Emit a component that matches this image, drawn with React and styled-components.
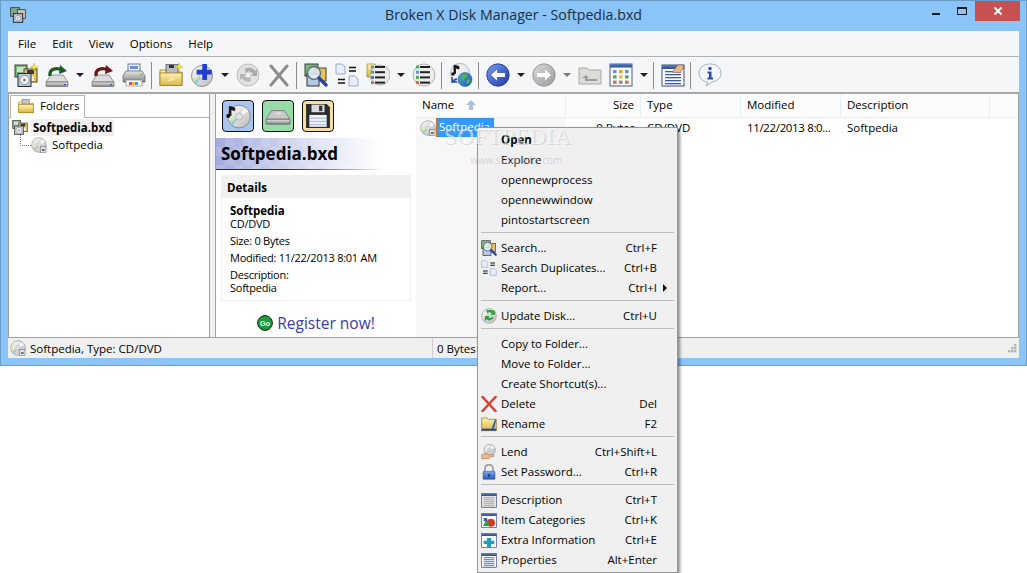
import React from 'react';
import styled, { createGlobalStyle } from 'styled-components';

const Global = createGlobalStyle`
  html, body { margin: 0; padding: 0; background: #fff; }
  body { font-family: "Open Sans", "Noto Sans", "Liberation Sans", sans-serif; font-size: 11.5px; color: #000; }
`;

/* ---------- icons ---------- */
const IconSvg = styled.svg`display: block; flex: none;`;
const DefsSvg = styled.svg`display: block; width: 0; height: 0;`;
const I = ({ s = 24, children }) => <IconSvg width={s} height={s} viewBox="0 0 24 24">{children}</IconSvg>;

const Grad = ({ id, a, b, diag }) => (
  <linearGradient id={id} x1="0" y1="0" x2={diag ? '1' : '0'} y2="1">
    <stop offset="0" stopColor={a} /><stop offset="1" stopColor={b} />
  </linearGradient>
);
const Defs = () => (
  <DefsSvg>
    <defs>
      <Grad id="gDisc" a="#fbfbfb" b="#bcbcbc" diag />
      <Grad id="gDrive" a="#e6e6e6" b="#858585" />
      <Grad id="gFolder" a="#fff2ae" b="#dcb548" />
      <Grad id="gBlue" a="#7c9cf4" b="#1a37a4" diag />
      <Grad id="gGrey" a="#dadada" b="#9a9a9a" diag />
      <Grad id="gGlobe" a="#4aa6e8" b="#1b5fb0" diag />
      <Grad id="gWin" a="#5a7fc4" b="#2a4a90" />
      <Grad id="gLock" a="#7aa6f0" b="#2a58b8" />
    </defs>
  </DefsSvg>
);

const wedge = (cx, cy, r, a1, a2) => {
  const p = (a) => `${(cx + r * Math.cos(a * Math.PI / 180)).toFixed(2)} ${(cy + r * Math.sin(a * Math.PI / 180)).toFixed(2)}`;
  return `M${cx} ${cy}L${p(a1)}A${r} ${r} 0 0 1 ${p(a2)}Z`;
};
const Disc = ({ cx = 12, cy = 12, r = 11 }) => (
  <g>
    <circle cx={cx} cy={cy} r={r} fill="url(#gDisc)" stroke="#8a8a8a" strokeWidth="0.9" />
    <path d={wedge(cx, cy, r - 1, 125, 145)} fill="#8fc8ee" />
    <path d={wedge(cx, cy, r - 1, 145, 160)} fill="#c5e79a" />
    <path d={wedge(cx, cy, r - 1, 160, 172)} fill="#f2e7a0" />
    <path d={wedge(cx, cy, r - 1, 305, 330)} fill="#ffffff" />
    <circle cx={cx} cy={cy} r={r * 0.3} fill="#ececec" stroke="#a4a4a4" strokeWidth="0.7" />
    <circle cx={cx} cy={cy} r={r * 0.11} fill="#fff" stroke="#999" strokeWidth="0.4" />
  </g>
);
const DiscBadge = ({ s = 16 }) => (
  <I s={s}><Disc />
    <rect x="14.5" y="14" width="8" height="9" fill="#e2e2e2" stroke="#777" strokeWidth="0.9" />
    <rect x="16.5" y="18" width="4" height="3" fill="#707070" />
  </I>
);
const Sparkle = ({ x = 20, y = 4 }) => (
  <path d={`M${x} ${y - 4}l1 3 3 1-3 1-1 3-1-3-3-1 3-1z`} fill="#ffe84a" stroke="#b89a10" strokeWidth="0.4" />
);
const Collection = ({ s = 24, spark }) => (
  <I s={s}>
    <rect x="1" y="2" width="12" height="12" fill="#79b57c" stroke="#3f3f3f" />
    <rect x="3" y="4" width="8" height="5" fill="#c9e4c8" />
    <rect x="10" y="6" width="13" height="13" fill="#e8c35a" stroke="#4c4226" />
    <rect x="13" y="7" width="7" height="4" fill="#3d3d3d" />
    <rect x="13" y="13" width="7" height="5" fill="#fff6d0" />
    <rect x="4" y="10.5" width="13" height="13" fill="#b5c8e6" stroke="#2e2e2e" />
    <circle cx="10.5" cy="17" r="4.6" fill="#f3f3f3" stroke="#666" strokeWidth="0.6" />
    <circle cx="10.5" cy="17" r="1.3" fill="#777" />
    {spark && <Sparkle />}
  </I>
);
const Drive = ({ color }) => (
  <I>
    <path d="M6 12L1 19H23L18 12Z" fill="#dcdcdc" stroke="#777" strokeWidth="0.7" />
    <rect x="1" y="19" width="22" height="4.5" rx="0.8" fill="url(#gDrive)" stroke="#666" strokeWidth="0.7" />
    <rect x="19" y="21" width="2" height="1.2" fill="#3050d0" />
    <path d="M5 13C4 6 11 4 17 7" fill="none" stroke={color} strokeWidth="3.4" />
    <path d="M15 2L22 8L14 11Z" fill={color} />
  </I>
);
const Printer = () => (
  <I>
    <rect x="6" y="1" width="12" height="8" fill="#eef3fb" stroke="#6a7a9a" />
    <rect x="8" y="3" width="8" height="3" fill="#6a8fdc" />
    <path d="M4 8H20L23 13V19H1V13Z" fill="url(#gDrive)" stroke="#5a5a5a" strokeWidth="0.7" />
    <rect x="4" y="17" width="16" height="6" fill="#fafafa" stroke="#777" strokeWidth="0.6" />
    <rect x="7" y="19" width="3" height="3" fill="#d040a0" /><rect x="10" y="19" width="3" height="3" fill="#e8c030" /><rect x="13" y="19" width="3" height="3" fill="#30a0d8" />
    <rect x="18" y="11" width="2" height="1.5" fill="#50c050" />
  </I>
);
const FolderNew = () => (
  <I>
    <path d="M1 7H9L11 9H23V22.5H1Z" fill="url(#gFolder)" stroke="#a38526" strokeWidth="0.9" />
    <rect x="7" y="1.5" width="12" height="9" fill="#b8bcc4" stroke="#4a4a4a" strokeWidth="0.7" />
    <rect x="10" y="2" width="5" height="3" fill="#333" />
    <rect x="1" y="10" width="22" height="12.5" fill="url(#gFolder)" stroke="#a38526" strokeWidth="0.9" />
    <path d="M9 18c2-3 5-3 7-4-1 3-4 5-7 4z" fill="#f6e9b8" />
    <Sparkle />
  </I>
);
const DiscPlus = () => (
  <I><Disc cy={13} r={10.5} />
    <path d="M14 1h5v6h5v5h-5v6h-5v-6H8V7h6z" fill="#1f3fd0" transform="translate(-1 0) scale(.95)" />
  </I>
);
const DiscSync = () => (
  <I>
    <circle cx="12" cy="12" r="11" fill="#e2e2e2" stroke="#bdbdbd" />
    <circle cx="12" cy="12" r="3" fill="#f2f2f2" stroke="#c8c8c8" />
    <path d="M9 6a7 7 0 0 1 10 2l2-2v7h-6l2-2a4 4 0 0 0-7-1z" fill="#a9a9a9" />
    <path d="M15 18a7 7 0 0 1-9-3l-2 2v-6h6l-2 2a4 4 0 0 0 6 1z" fill="#b5b5b5" />
  </I>
);
const CrossGrey = () => (
  <I><path d="M4 3L20 22M20 3L4 22" stroke="#8c8c8c" strokeWidth="3" strokeLinecap="round" /></I>
);
const CrossRed = () => (
  <I s={16}><path d="M2 1L22 23M22 1L2 23" stroke="#dc3a2a" strokeWidth="3.4" strokeLinecap="round" /></I>
);
const Search = ({ s = 24 }) => (
  <I s={s}>
    <rect x="1" y="1" width="13" height="12" fill="#79b57c" stroke="#3f3f3f" />
    <rect x="12" y="5" width="10" height="13" fill="#e8c35a" stroke="#4c4226" />
    <rect x="3" y="11" width="12" height="12" fill="#b5c8e6" stroke="#2e2e2e" />
    <circle cx="10" cy="10" r="6.5" fill="#e6eef4" fillOpacity=".85" stroke="#5c6c7c" strokeWidth="1.4" />
    <path d="M15 15L22 22" stroke="#2646a8" strokeWidth="3.4" strokeLinecap="round" />
  </I>
);
const Dup = ({ s = 24 }) => (
  <I s={s}>
    <path d="M1 1H7L10 4V11H1Z" fill="#e8eefa" stroke="#8a98b8" strokeWidth="0.8" />
    <path d="M14 13H20L23 16V23H14Z" fill="#e8eefa" stroke="#8a98b8" strokeWidth="0.8" />
    <path d="M14 4.5H21M14 8H21M3 16.5H10M3 20H10" stroke="#111" strokeWidth="1.6" />
  </I>
);
const Rows = ({ x = 3, colors }) => colors.map((c, i) => (
  <g key={i}>
    <rect x={x} y={2.5 + i * 5.2} width="3" height="3" fill={c} />
    <rect x={x + 4} y={3 + i * 5.2} width="10" height="2" fill="#222" />
  </g>
));
const ItemsFolder = () => (
  <I>
    <path d="M1 1H9L11 3V14H1Z" fill="url(#gFolder)" stroke="#a38526" strokeWidth="0.7" />
    <circle cx="14" cy="12" r="10" fill="#ececec" stroke="#999" strokeWidth="0.7" />
    <Rows x={5} colors={['#6a8fdc', '#50a860', '#5070c0', '#d86a50']} />
  </I>
);
const ItemsDisc = () => (
  <I>
    <circle cx="12" cy="12" r="11" fill="#ececec" stroke="#999" strokeWidth="0.7" />
    <Rows x={4} colors={['#50a860', '#6a8fdc', '#50a860', '#d86a50']} />
  </I>
);
const Note = () => (
  <g>
    <path d="M5 10V2L10 3.5V6L6.5 5V11" fill="#111" stroke="#111" strokeWidth="0.8" />
    <circle cx="4" cy="11" r="1.8" fill="#111" />
  </g>
);
const GlobeDisc = () => (
  <I>
    <circle cx="11" cy="10" r="9.5" fill="#eee" stroke="#999" strokeWidth="0.7" />
    <Note />
    <circle cx="16" cy="16.5" r="7" fill="url(#gGlobe)" stroke="#164a8c" strokeWidth="0.5" />
    <path d="M12 13c2-2 5-2 6-1s-1 3-2 3-1 3-2 3-2-3-2-5zM18 17c2-1 3 0 3 1s-2 3-3 3 0-3 0-4z" fill="#54b43c" />
    <path d="M3 14v5h5M4 19c1-2 2-3 4-3" fill="none" stroke="#1f4ab0" strokeWidth="1.6" />
  </I>
);
const RoundArrow = ({ dir, fill }) => (
  <I>
    <circle cx="12" cy="12" r="11.2" fill={fill} stroke={dir === 'l' ? '#18308c' : '#8c8c8c'} strokeWidth="0.8" />
    <path d={dir === 'l' ? 'M5 12L11 6.5V10H19V14H11V17.5Z' : 'M19 12L13 6.5V10H5V14H13V17.5Z'} fill="#fff" />
  </I>
);
const UpFolder = () => (
  <I>
    <path d="M1 5H9L11 7H23V21H1Z" fill="#dcdcd8" stroke="#a8a8a8" />
    <path d="M8 12l-4 3h3v3h12v-2H9v-1h2z" fill="#9c9c9c" />
  </I>
);
const GridWin = () => (
  <I>
    <rect x="1" y="1" width="22" height="22" fill="#fbfbfb" stroke="#4a5a90" strokeWidth="1" />
    <rect x="1" y="1" width="22" height="3.5" fill="url(#gWin)" />
    {[['#6a8fdc', '#e0a040', '#6a8fdc'], ['#50a860', '#e0c040', '#50a860'], ['#d86a50', '#8a8a8a', '#d86a50']].map((r, j) =>
      r.map((c, i) => <rect key={`${i}${j}`} x={4 + i * 6} y={7 + j * 5.3} width="3.6" height="3.2" fill={c} />))}
  </I>
);
const WinLines = ({ s = 24, hand, plus, cats, dim }) => (
  <I s={s}>
    <rect x="1" y="2" width="22" height="21" fill={dim ? '#e4e4e4' : '#fdfdfd'} stroke="#384a88" strokeWidth="1" />
    <rect x="1" y="2" width="22" height="4" fill="url(#gWin)" />
    {!plus && !cats && [8, 11, 14, 17, 20].map((y) => <rect key={y} x="4" y={y} width="16" height="1.3" fill={dim ? '#a0a0a0' : '#3a5aa8'} />)}
    {hand && <path d="M11 9l6-7c2-1 5 0 6 2l-4 6z" fill="#eab78a" stroke="#8a5a30" strokeWidth="0.6" />}
    {plus && <path d="M9 9h6v4h5v5h-5v5H9v-5H4v-5h5z" fill="#20a0b8" />}
    {cats && <g><circle cx="15" cy="16" r="6" fill="#dc3a20" /><path d="M3 21L9 10L13 21Z" fill="#30a040" /><rect x="4" y="9" width="5" height="5" fill="#3060c0" /></g>}
  </I>
);
const InfoBubble = () => (
  <I>
    <path d="M12 1C5 1 1 5 1 10s4 9 9 9l-2 4 6-4c5-1 9-4 9-9s-4-9-11-9z" fill="#f6f8fd" stroke="#8a9ab8" strokeWidth="0.8" />
    <circle cx="12" cy="5.5" r="1.7" fill="#2846b4" />
    <path d="M9.5 8.5H13.5V14.5H15V16.5H9.5V14.5H11V10.5H9.5Z" fill="#2846b4" />
  </I>
);
const DiscUpdate = () => (
  <I s={16}><Disc />
    <path d="M8 3h9l2 2v0l2-2v7h-7l2-2c-2-2-5-2-7 0z" fill="#2fa03c" />
    <path d="M19 14c-2 5-8 6-11 3l-2 2v-7h7l-2 2c2 2 5 1 6-1z" fill="#2fa03c" />
  </I>
);
const RenameFolder = () => (
  <I s={16}>
    <path d="M1 3H9L11 5H23V22H1Z" fill="url(#gFolder)" stroke="#8a7020" strokeWidth="1" />
    <rect x="1" y="19" width="22" height="3" fill="#2a4aa0" />
    <path d="M16 19L21 5L23 6L19 20Z" fill="#2a5ac8" />
  </I>
);
const Lend = () => (
  <I s={16}><Disc cx={13} cy={9} r={8.5} />
    <path d="M1 16c4-2 8-2 10 0l7 0c2 0 2 3 0 3h-4l-2 3H1z" fill="#eab98e" stroke="#8c6034" strokeWidth="0.7" />
  </I>
);
const Lock = () => (
  <I s={16}>
    <path d="M6 11V7a6 6 0 0 1 12 0v4" fill="none" stroke="#9a9a9a" strokeWidth="2.6" />
    <rect x="3" y="11" width="18" height="12" rx="1" fill="url(#gLock)" stroke="#2a4a90" strokeWidth="0.7" />
    <rect x="11" y="15" width="2" height="4" fill="#10204a" />
  </I>
);
const FolderTab = () => (
  <I s={16}>
    <path d="M1 6H9L11 8H23V22H1Z" fill="url(#gFolder)" stroke="#a38526" strokeWidth="1" />
    <rect x="6" y="2" width="11" height="7" fill="#c0c4cc" stroke="#666" strokeWidth="0.7" />
    <rect x="1" y="10" width="22" height="12" fill="url(#gFolder)" stroke="#a38526" strokeWidth="1" />
  </I>
);
const AppGlyph = () => (
  <IconSvg width="16" height="16" viewBox="0 0 24 24">
    <rect x="1" y="1" width="13" height="13" fill="#7fa890" stroke="#333" strokeWidth="1.2" />
    <rect x="11" y="4" width="12" height="13" fill="#cfc6a6" stroke="#333" strokeWidth="1.2" />
    <rect x="5" y="10" width="14" height="13" fill="#b5c4d8" stroke="#222" strokeWidth="1.4" />
    <circle cx="12" cy="16.5" r="3.8" fill="#f4f4f4" stroke="#666" strokeWidth="0.7" />
    <circle cx="12" cy="16.5" r="1.1" fill="#777" />
  </IconSvg>
);
const TileDisc = () => (
  <I s={26}><Disc cx={13} cy={12.5} r={10.5} />
    <g transform="translate(-1 1)"><Note /></g>
  </I>
);
const TileDrive = () => (
  <I s={26}>
    <path d="M6 7L1 15H23L18 7Z" fill="#c8c8c8" stroke="#6a6a6a" strokeWidth="0.7" />
    <path d="M8 10c3-2 6-2 9 0-3 1-6 1-9 0z" fill="#dcdcdc" />
    <rect x="1" y="15" width="22" height="4.5" rx="0.8" fill="url(#gDrive)" stroke="#5a5a5a" strokeWidth="0.7" />
  </I>
);
const TileFloppy = () => (
  <I s={26}>
    <path d="M1 1H20L23 4V23H1Z" fill="#2c2c2c" />
    <rect x="6" y="1.5" width="12" height="7" fill="#dcdcdc" /><rect x="13" y="2.5" width="3" height="5" fill="#333" />
    <rect x="4" y="11" width="16" height="11" fill="#f0f2fc" />
    <path d="M4 14H20M4 17H20M4 20H20" stroke="#9aa8d8" strokeWidth="0.8" />
  </I>
);
const GoBadge = () => (
  <IconSvg width="16" height="16" viewBox="0 0 16 16">
    <circle cx="8" cy="8" r="7.4" fill="#1d9a3c" stroke="#0a2a10" strokeWidth="1" />
    <text x="8" y="10.6" fontSize="7.5" fontWeight="700" fill="#e8ffe8" textAnchor="middle" fontFamily="Liberation Sans, sans-serif">Go</text>
  </IconSvg>
);
const Grip = () => (
  <IconSvg width="9" height="9" viewBox="0 0 9 9">
    {[[6, 0], [3, 3], [6, 3], [0, 6], [3, 6], [6, 6]].map(([x, y]) => <rect key={`${x}${y}`} x={x} y={y} width="2.4" height="2.4" fill="#b4b4b4" />)}
  </IconSvg>
);

/* ---------- window frame ---------- */
const Window = styled.div`
  box-sizing: border-box; width: 1027px; height: 366px;
  display: flex; flex-direction: column;
  background: #8ac4f9; border: 1px solid #6a9cc8;
`;
const TitleBar = styled.div`height: 30px; flex: none; display: flex; align-items: flex-start;`;
const AppIconSlot = styled.div`padding: 6px 0 0 9px;`;
const Title = styled.div`
  flex: 1; text-align: center; font-size: 14.2px; line-height: 28px; color: #1e2e3c; padding-left: 79px;
`;
const Controls = styled.div`display: flex; align-items: flex-start; margin-right: 6px;`;
const CtlBtn = styled.div`
  display: flex; align-items: center; justify-content: center;
  width: ${(p) => p.$w}px; height: 20px; background: ${(p) => p.$bg || 'transparent'};
`;
const MinGlyph = styled.i`display: block; width: 8px; height: 2.5px; background: #1a1a1a; margin-top: 6px;`;
const MaxGlyph = styled.i`display: block; box-sizing: border-box; width: 10px; height: 8px; border: 1px solid #1a1a1a; border-top-width: 2px;`;

const Client = styled.div`
  flex: 1; margin: 0 7px 7px; display: flex; flex-direction: column; min-height: 0; background: #f0f0f0;
`;
const MenuBar = styled.div`
  box-sizing: border-box; height: 26px; flex: none; display: flex; align-items: center;
  background: #f5f6f7; border-bottom: 1px solid #b0b0b0; padding-left: 10px; gap: 16px;
`;
const MenuLabel = styled.span`color: #000; line-height: 25px; font-size: 11.5px;`;

const Toolbar = styled.div`
  box-sizing: border-box; height: 37px; flex: none; display: flex; align-items: center;
  background: #f5f6f7; border-bottom: 2px solid #a8a8a8; padding: 1px 0 0 2px;
`;
const ToolBtn = styled.div`
  width: 31px; height: 26px; display: flex; align-items: center; justify-content: center; flex: none;
`;
const ToolArrow = styled.div`
  width: 15px; height: 26px; flex: none; display: flex; align-items: center; justify-content: center;
  &::before {
    content: ''; border-left: 4px solid transparent; border-right: 4px solid transparent;
    border-top: 4px solid ${(p) => (p.$off ? '#7a7a7a' : '#222')};
  }
`;
const ToolSep = styled.div`
  width: 6px; height: 27px; flex: none; box-sizing: border-box; padding-left: 2px;
  &::before { content: ''; display: block; width: 1px; height: 100%; background: #8c8c8c; }
`;

/* ---------- workspace ---------- */
const Workspace = styled.div`flex: 1; display: flex; min-height: 0; background: #fff;`;
const FolderPane = styled.div`
  box-sizing: border-box; width: 202px; flex: none; display: flex; flex-direction: column;
  border-left: 1px solid #9c9c9c; border-right: 1px solid #9c9c9c; background: #fff;
`;
const TabStrip = styled.div`
  box-sizing: border-box; height: 24px; flex: none; display: flex; align-items: flex-end;
  padding-left: 1px; background: #fdfdfd; border-bottom: 1px solid #b4b4b4;
`;
const Tab = styled.div`
  box-sizing: border-box; width: 75px; height: 23px; margin-bottom: -1px; display: flex; align-items: center; gap: 6px;
  padding: 0 0 3px 7px; background: #fff; border: 1px solid #b4b4b4; border-bottom: none;
`;
const Tree = styled.div`display: flex; flex-direction: column; padding: 0 0 0 3px;`;
const TreeRoot = styled.div`display: flex; align-items: center; height: 18px; gap: 3px;`;
const RootName = styled.span`background: #f0f0f0; font-weight: 700; padding: 0 2px; line-height: 17px;`;
const TreeChild = styled.div`display: flex; align-items: center; height: 17px; gap: 5px; padding-left: 19px; position: relative;`;
const TreeLink = styled.i`
  position: absolute; left: 8px; top: -1px; width: 10px; height: 10px;
  border-left: 1px dotted #777; border-bottom: 1px dotted #777;
`;
const Splitter = styled.div`
  box-sizing: border-box; width: 6px; flex: none; background: #f0f0f0; border-right: 1px solid #a0a0a0;
`;

const InfoPane = styled.div`
  width: 200px; flex: none; box-sizing: border-box; background: #fff; padding-top: 6px; display: flex; flex-direction: column;
`;
const TileRow = styled.div`display: flex; gap: 8px; padding-left: 6px;`;
const TileBtn = styled.div`
  box-sizing: border-box; width: 32px; height: 32px; border: 1.5px solid #111; border-radius: 4px;
  background: ${(p) => p.$bg}; display: flex; align-items: center; justify-content: center;
`;
const Banner = styled.div`
  box-sizing: border-box; margin-top: 6px; height: 32px; padding: 0 0 2px 5px; display: flex; align-items: center;
  font-size: 17px; font-weight: 700; color: #000; position: relative;
  background:
    linear-gradient(90deg, rgba(255,255,255,0) 0, rgba(255,255,255,.6) 45%, #fff 82%),
    repeating-conic-gradient(#aeb5e3 0 25%, #a3abdd 0 50%) 0 0 / 18px 18px;
  &::after {
    content: ''; position: absolute; left: 0; right: 30px; bottom: 0; height: 1.5px;
    background: linear-gradient(90deg, #1a2a80, #1a2a80 40%, rgba(26,42,128,0));
  }
`;
const Details = styled.div`margin: 5px 5px 0; display: flex; flex-direction: column;`;
const DetailsHead = styled.div`
  box-sizing: border-box; height: 23px; background: #f0f0f0; font-weight: 700; display: flex; align-items: center; padding: 2px 0 0 6px;
`;
const DetailsBody = styled.div`
  box-sizing: border-box; height: 103px; border: 1px solid #f0f0f0; border-top: none; padding: 6px 0 0 8px;
  line-height: 13px;
`;
const DLine = styled.div`
  margin-top: ${(p) => (p.$gap ? 4 : 0)}px; white-space: nowrap;
  font-weight: ${(p) => (p.$bold ? 700 : 400)};
  font-size: ${(p) => (p.$bold ? 11.5 : 11)}px;
  letter-spacing: ${(p) => (p.$bold ? 0 : -0.25)}px;
`;
const Register = styled.div`
  display: flex; align-items: center; justify-content: center; gap: 4px; margin-top: 13px;
  font-size: 15.5px; color: #3a3ab0; line-height: 18px;
`;

/* ---------- list ---------- */
const ListPane = styled.div`
  flex: 1; min-width: 0; display: flex; flex-direction: column; border-right: 1px solid #a0a0a0;
  background: linear-gradient(90deg, #f7f7f7 150px, #fff 150px);
`;
const ListHead = styled.div`
  box-sizing: border-box; height: 24px; flex: none; display: flex; background: #fcfcfc; border-bottom: 1px solid #e4eef8;
`;
const HeadCell = styled.div`
  box-sizing: border-box; width: ${(p) => p.$w}px; flex: none; padding: 0 6px 2px; display: flex; align-items: center;
  justify-content: ${(p) => (p.$right ? 'flex-end' : 'flex-start')}; border-right: 1px solid #e4eef8; color: #000;
`;
const SortUp = styled.svg`display: block; margin-left: 12px;`;
const ListRow = styled.div`display: flex; height: 19px; align-items: center;`;
const Cell = styled.div`
  box-sizing: border-box; width: ${(p) => p.$w}px; flex: none; padding: 0 6px 1px; white-space: nowrap; overflow: hidden;
  text-align: ${(p) => (p.$right ? 'right' : 'left')};
  letter-spacing: ${(p) => (p.$tight ? -0.35 : 0)}px;
`;
const NameCell = styled.div`width: 150px; flex: none; display: flex; align-items: center; padding-left: 4px; box-sizing: border-box;`;
const Selected = styled.span`
  box-sizing: border-box; width: 58px; height: 19px; line-height: 16px; padding-left: 2px; background: #3399ff; color: #fff;
  border: 1px dotted #c06a20; white-space: nowrap;
`;

/* ---------- status ---------- */
const StatusBar = styled.div`
  box-sizing: border-box; height: 21px; flex: none; display: flex; align-items: center; background: #f0f0f0;
  border-top: 1px solid #a0a0a0;
`;
const StatusMain = styled.div`
  box-sizing: border-box; width: 425px; height: 100%; display: flex; align-items: center; gap: 4px; padding-left: 2px;
  border-right: 1px solid #d0d0d0;
`;
const StatusCell = styled.div`padding-left: 4px; flex: 1;`;
const GripSlot = styled.div`padding: 6px 2px 0 0; align-self: flex-start;`;

/* ---------- context menu ---------- */
const ContextMenu = styled.div`
  position: absolute; left: 477px; top: 127px; width: 201px; box-sizing: border-box; height: 446px; padding-top: 1px;
  background: #f0f0f0; border: 1px solid #979797;
  box-shadow: 2px 2px 3px rgba(0,0,0,.45); z-index: 5;
`;
const MItem = styled.div`
  height: 20px; display: flex; align-items: center; position: relative; padding-right: 20px; color: #000;
`;
const MIconSlot = styled.div`width: 23px; flex: none; padding: 2px 0 0 3px; box-sizing: border-box;`;
const MText = styled.span`flex: 1; font-weight: ${(p) => (p.$bold ? 700 : 400)}; white-space: nowrap;`;
const MKey = styled.span`white-space: nowrap;`;
const SubCaret = styled.i`
  position: absolute; right: 10px; top: 7px; border-left: 4px solid #111;
  border-top: 4px solid transparent; border-bottom: 4px solid transparent;
`;
const MSep = styled.div`height: 1px; margin: 3px 3px 4px; background: #bdbdbd;`;

const Watermark = styled.div`
  position: absolute; left: 444px; top: 124px; z-index: 6; pointer-events: none;
  font-family: "Liberation Serif", serif; font-size: 23px; letter-spacing: 0.4px; color: rgba(255,255,255,.5);
  text-shadow: 1px 1px 0 rgba(170,170,170,.4); white-space: nowrap;
`;
const WatermarkUrl = styled.div`
  position: absolute; left: 470px; top: 153px; z-index: 6; pointer-events: none;
  font-size: 10px; color: rgba(185,185,185,.55); white-space: nowrap;
`;

const toolbar = [
  ['t', <Collection spark />], ['t', <Drive color="#1f5a2a" />], ['a'], ['t', <Drive color="#6a1818" />], ['t', <Printer />], ['s'],
  ['t', <FolderNew />], ['t', <DiscPlus />], ['a'], ['t', <DiscSync />], ['t', <CrossGrey />], ['s'],
  ['t', <Search />], ['t', <Dup />], ['t', <ItemsFolder />], ['a'], ['t', <ItemsDisc />], ['s'],
  ['t', <GlobeDisc />], ['s'],
  ['t', <RoundArrow dir="l" fill="url(#gBlue)" />], ['a'], ['t', <RoundArrow dir="r" fill="url(#gGrey)" />], ['o'], ['t', <UpFolder />],
  ['t', <GridWin />], ['a'], ['s'], ['t', <WinLines hand />], ['s'], ['t', <InfoBubble />],
];

const menu = [
  { t: 'Open', bold: true }, { t: 'Explore' }, { t: 'opennewprocess' }, { t: 'opennewwindow' }, { t: 'pintostartscreen' }, '-',
  { t: 'Search...', k: 'Ctrl+F', i: <Search s={16} /> }, { t: 'Search Duplicates...', k: 'Ctrl+B', i: <Dup s={16} /> }, { t: 'Report...', k: 'Ctrl+I', sub: true }, '-',
  { t: 'Update Disk...', k: 'Ctrl+U', i: <DiscUpdate /> }, '-',
  { t: 'Copy to Folder...' }, { t: 'Move to Folder...' }, { t: 'Create Shortcut(s)...' },
  { t: 'Delete', k: 'Del', i: <CrossRed /> }, { t: 'Rename', k: 'F2', i: <RenameFolder /> }, '-',
  { t: 'Lend', k: 'Ctrl+Shift+L', i: <Lend /> }, { t: 'Set Password...', k: 'Ctrl+R', i: <Lock /> }, '-',
  { t: 'Description', k: 'Ctrl+T', i: <WinLines s={16} dim /> }, { t: 'Item Categories', k: 'Ctrl+K', i: <WinLines s={16} cats /> },
  { t: 'Extra Information', k: 'Ctrl+E', i: <WinLines s={16} plus /> }, { t: 'Properties', k: 'Alt+Enter', i: <WinLines s={16} /> },
];

export default function App() {
  return (
    <>
      <Global />
      <Defs />
      <Window>
        <TitleBar>
          <AppIconSlot><AppGlyph /></AppIconSlot>
          <Title>Broken X Disk Manager - Softpedia.bxd</Title>
          <Controls>
            <CtlBtn $w={27}><MinGlyph /></CtlBtn>
            <CtlBtn $w={26}><MaxGlyph /></CtlBtn>
            <CtlBtn $w={45} $bg="#c75050">
              <IconSvg width="10" height="10" viewBox="0 0 10 10"><path d="M1.5 1.5L8.5 8.5M8.5 1.5L1.5 8.5" stroke="#fff" strokeWidth="2" /></IconSvg>
            </CtlBtn>
          </Controls>
        </TitleBar>
        <Client>
          <MenuBar>
            {['File', 'Edit', 'View', 'Options', 'Help'].map((m) => <MenuLabel key={m}>{m}</MenuLabel>)}
          </MenuBar>
          <Toolbar>
            {toolbar.map(([k, icon], i) => {
              if (k === 't') return <ToolBtn key={i}>{icon}</ToolBtn>;
              if (k === 'a') return <ToolArrow key={i} />;
              if (k === 'o') return <ToolArrow key={i} $off />;
              return <ToolSep key={i} />;
            })}
          </Toolbar>
          <Workspace>
            <FolderPane>
              <TabStrip><Tab><FolderTab />Folders</Tab></TabStrip>
              <Tree>
                <TreeRoot><Collection s={16} /><RootName>Softpedia.bxd</RootName></TreeRoot>
                <TreeChild><TreeLink /><DiscBadge />Softpedia</TreeChild>
              </Tree>
            </FolderPane>
            <Splitter />
            <InfoPane>
              <TileRow>
                <TileBtn $bg="#a9c4f0"><TileDisc /></TileBtn>
                <TileBtn $bg="#97dca8"><TileDrive /></TileBtn>
                <TileBtn $bg="#f4dea4"><TileFloppy /></TileBtn>
              </TileRow>
              <Banner>Softpedia.bxd</Banner>
              <Details>
                <DetailsHead>Details</DetailsHead>
                <DetailsBody>
                  <DLine $bold>Softpedia</DLine>
                  <DLine>CD/DVD</DLine>
                  <DLine $gap>Size: 0 Bytes</DLine>
                  <DLine $gap>Modified: 11/22/2013 8:01 AM</DLine>
                  <DLine $gap>Description:</DLine>
                  <DLine>Softpedia</DLine>
                </DetailsBody>
              </Details>
              <Register><GoBadge />Register now!</Register>
            </InfoPane>
            <ListPane>
              <ListHead>
                <HeadCell $w={150}>Name
                  <SortUp width="10" height="10" viewBox="0 0 10 10"><path d="M5 0L10 5H7V10H3V5H0Z" fill="#a8c0d8" /></SortUp>
                </HeadCell>
                <HeadCell $w={75} $right>Size</HeadCell>
                <HeadCell $w={100}>Type</HeadCell>
                <HeadCell $w={100}>Modified</HeadCell>
                <HeadCell $w={149}>Description</HeadCell>
              </ListHead>
              <ListRow>
                <NameCell><DiscBadge /><Selected>Softpedia</Selected></NameCell>
                <Cell $w={75} $right>0 Bytes</Cell>
                <Cell $w={100}>CD/DVD</Cell>
                <Cell $w={100} $tight>11/22/2013 8:0...</Cell>
                <Cell $w={149}>Softpedia</Cell>
              </ListRow>
            </ListPane>
          </Workspace>
          <StatusBar>
            <StatusMain><DiscBadge />Softpedia, Type: CD/DVD</StatusMain>
            <StatusCell>0 Bytes</StatusCell>
            <GripSlot><Grip /></GripSlot>
          </StatusBar>
        </Client>
      </Window>
      <ContextMenu>
        {menu.map((m, i) => (m === '-' ? <MSep key={i} /> : (
          <MItem key={m.t}>
            <MIconSlot>{m.i}</MIconSlot>
            <MText $bold={m.bold}>{m.t}</MText>
            {m.k && <MKey>{m.k}</MKey>}
            {m.sub && <SubCaret />}
          </MItem>
        )))}
      </ContextMenu>
      <Watermark>SOFTPEDIA</Watermark>
      <WatermarkUrl>www.softpedia.com</WatermarkUrl>
    </>
  );
}
